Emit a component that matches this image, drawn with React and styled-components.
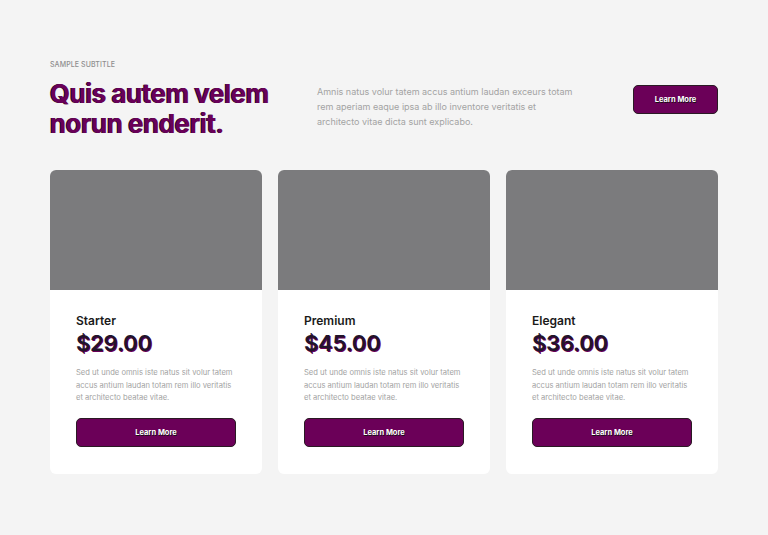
import React from 'react'
import styled, { createGlobalStyle } from 'styled-components'

const GlobalStyle = createGlobalStyle`
  html, body {
    margin: 0;
    padding: 0;
    background: #f4f4f4;
  }
  body {
    font-family: Inter, "Noto Sans", "Liberation Sans", sans-serif;
  }
`

const Page = styled.div`
  width: 668px;
  margin: 0 auto;
  padding: 60px 0 0;
`

const Header = styled.div`
  display: flex;
  align-items: flex-start;
`

const Intro = styled.div`
  width: 267px;
`

const Subtitle = styled.div`
  font-size: 7px;
  font-weight: 500;
  color: #8d8d8d;
  text-transform: uppercase;
  letter-spacing: 0.1px;
`

const Title = styled.h1`
  margin: 10px 0 0;
  font-size: 26px;
  line-height: 30px;
  font-weight: 700;
  letter-spacing: -0.5px;
  color: #6a0058;
  text-shadow: -1px -0.5px 0 #1c0c18;
`

const Lead = styled.p`
  margin: 24px 0 0;
  width: 256px;
  font-size: 9px;
  line-height: 15px;
  color: #a3a3a3;
`

const Button = styled.button`
  width: ${props => props.wide ? '160px' : '85px'};
  height: 29px;
  margin: ${props => props.wide ? '0' : '25px 0 0 auto'};
  background: #6b0058;
  border: 1px solid #2a1a24;
  border-radius: 5px;
  color: #fff;
  font-family: inherit;
  font-size: 7.5px;
  font-weight: 700;
  text-shadow: 0.5px 0.5px 0 #111;
  cursor: pointer;
`

const Cards = styled.div`
  display: grid;
  grid-template-columns: repeat(3, 1fr);
  gap: 16px;
  margin-top: 31px;
`

const Card = styled.div`
  background: #fff;
  border-radius: 6px;
  overflow: hidden;
`

const Cover = styled.div`
  height: 120px;
  background: #7b7b7d;
`

const Body = styled.div`
  padding: 23px 26px 27px;
`

const Plan = styled.div`
  font-size: 12px;
  font-weight: 600;
  color: #1a1a1a;
`

const Price = styled.div`
  margin-top: 1px;
  font-size: 22px;
  font-weight: 600;
  line-height: 28px;
  letter-spacing: -0.2px;
  color: #22142a;
  text-shadow: 1px 0.5px 0 #6a0058;
`

const Text = styled.p`
  margin: 10px 0 13px;
  font-size: 7.6px;
  line-height: 12.5px;
  color: #a3a3a3;
`

const plans = [
  { name: 'Starter', price: '$29.00' },
  { name: 'Premium', price: '$45.00' },
  { name: 'Elegant', price: '$36.00' }
]

export default function App() {
  return (
    <Page>
      <GlobalStyle />
      <Header>
        <Intro>
          <Subtitle>Sample Subtitle</Subtitle>
          <Title>Quis autem velem norun enderit.</Title>
        </Intro>
        <Lead>
          Amnis natus volur tatem accus antium laudan exceurs totam rem aperiam eaque ipsa ab illo inventore veritatis et architecto vitae dicta sunt explicabo.
        </Lead>
        <Button>Learn More</Button>
      </Header>

      <Cards>
        {plans.map(p => (
          <Card key={p.name}>
            <Cover />
            <Body>
              <Plan>{p.name}</Plan>
              <Price>{p.price}</Price>
              <Text>
                Sed ut unde omnis iste natus sit volur tatem accus antium laudan totam rem illo veritatis et architecto beatae vitae.
              </Text>
              <Button wide>Learn More</Button>
            </Body>
          </Card>
        ))}
      </Cards>
    </Page>
  )
}
